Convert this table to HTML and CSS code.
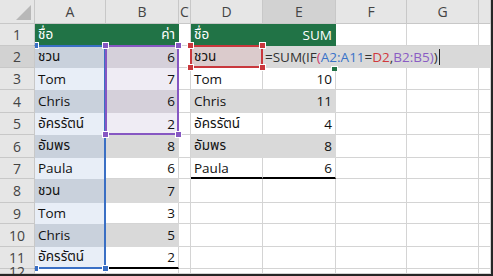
FILE: index.html
```html
<!DOCTYPE html>
<html>
<head>
<meta charset="utf-8">
<link rel="stylesheet" href="styles.css">
</head>
<body>
<div class="wrap">
<div class="sheet grid">
  <div class="corner"><span class="tri"></span></div>
  <div class="ch">A</div>
  <div class="ch">B</div>
  <div class="ch">C</div>
  <div class="ch">D</div>
  <div class="ch act">E</div>
  <div class="ch">F</div>
  <div class="ch">G</div>
  <div class="ch"></div>

  <div class="rh">1</div>
  <div class="c g">ชื่อ</div>
  <div class="c g n">ค่า</div>
  <div class="c"></div>
  <div class="c g">ชื่อ</div>
  <div class="c g n">SUM</div>
  <div class="c"></div>
  <div class="c"></div>
  <div class="c"></div>

  <div class="rh act">2</div>
  <div class="c sa1">ชวน</div>
  <div class="c sb1 n">6</div>
  <div class="c"></div>
  <div class="c sd">ชวน</div>
  <div class="c edit"><span class="k">=SUM(IF</span><span class="pr">(</span><span class="bl">A2:A11</span><span class="k">=</span><span class="rd">D2</span><span class="k">,</span><span class="pu">B2:B5</span><span class="pu">)</span><span class="k">)</span><span class="caret"></span></div>

  <div class="rh">3</div>
  <div class="c sa2">Tom</div>
  <div class="c sb2 n">7</div>
  <div class="c"></div>
  <div class="c">Tom</div>
  <div class="c n">10</div>
  <div class="c"></div>
  <div class="c"></div>
  <div class="c"></div>

  <div class="rh">4</div>
  <div class="c sa1">Chris</div>
  <div class="c sb1 n">6</div>
  <div class="c"></div>
  <div class="c band">Chris</div>
  <div class="c band n">11</div>
  <div class="c"></div>
  <div class="c"></div>
  <div class="c"></div>

  <div class="rh">5</div>
  <div class="c sa2">อัครรัตน์</div>
  <div class="c sb2 n">2</div>
  <div class="c"></div>
  <div class="c">อัครรัตน์</div>
  <div class="c n">4</div>
  <div class="c"></div>
  <div class="c"></div>
  <div class="c"></div>

  <div class="rh">6</div>
  <div class="c sa1">อัมพร</div>
  <div class="c band n">8</div>
  <div class="c"></div>
  <div class="c band">อัมพร</div>
  <div class="c band n">8</div>
  <div class="c"></div>
  <div class="c"></div>
  <div class="c"></div>

  <div class="rh">7</div>
  <div class="c sa2">Paula</div>
  <div class="c n">6</div>
  <div class="c"></div>
  <div class="c tb">Paula</div>
  <div class="c n tb">6</div>
  <div class="c"></div>
  <div class="c"></div>
  <div class="c"></div>

  <div class="rh">8</div>
  <div class="c sa1">ชวน</div>
  <div class="c band n">7</div>
  <div class="c"></div>
  <div class="c"></div>
  <div class="c"></div>
  <div class="c"></div>
  <div class="c"></div>
  <div class="c"></div>

  <div class="rh">9</div>
  <div class="c sa2">Tom</div>
  <div class="c n">3</div>
  <div class="c"></div>
  <div class="c"></div>
  <div class="c"></div>
  <div class="c"></div>
  <div class="c"></div>
  <div class="c"></div>

  <div class="rh">10</div>
  <div class="c sa1">Chris</div>
  <div class="c band n">5</div>
  <div class="c"></div>
  <div class="c"></div>
  <div class="c"></div>
  <div class="c"></div>
  <div class="c"></div>
  <div class="c"></div>

  <div class="rh">11</div>
  <div class="c sa2 tb">อัครรัตน์</div>
  <div class="c n tb">2</div>
  <div class="c"></div>
  <div class="c"></div>
  <div class="c"></div>
  <div class="c"></div>
  <div class="c"></div>
  <div class="c"></div>

  <div class="rh">12</div>
  <div class="c"></div>
  <div class="c"></div>
  <div class="c"></div>
  <div class="c"></div>
  <div class="c"></div>
  <div class="c"></div>
  <div class="c"></div>
  <div class="c"></div>
</div>
<div class="overlay grid">
  <div class="range r-blue"><span class="h tl"></span><span class="h bl"></span><span class="h br"></span></div>
  <div class="range r-purple"><span class="h tl"></span><span class="h tr"></span><span class="h bl"></span><span class="h br"></span></div>
  <div class="range r-red"><span class="h tl"></span><span class="h tr"></span><span class="h bl"></span><span class="h br"></span></div>
  <div class="active"><span class="fill"></span></div>
</div>
</div>
</body>
</html>
```

FILE: styles.css
```css
html, body {
  margin: 0;
  padding: 0;
  background: #ffffff;
}

.wrap {
  position: relative;
  width: 491px;
  height: 274px;
  border-right: 2px solid #262626;
  border-bottom: 2px solid #262626;
  overflow: hidden;
}

.grid {
  display: grid;
  grid-template-columns: 35px 71px 73px 12px 72px 73px 71px 72px 12px;
  grid-template-rows: 24px 22px 22px 22px 23px 22px 23px 21px 24px 21px 23px 22px 5px;
}

.sheet {
  width: 491px;
  height: 274px;
  font-family: "Open Sans", "Noto Sans", "Noto Sans Thai", "DejaVu Sans", sans-serif;
  font-size: 13.5px;
  color: #111;
}

.overlay {
  position: absolute;
  left: 0;
  top: 0;
  width: 491px;
  height: 274px;
  pointer-events: none;
}

.corner {
  background: #e6e6e6;
  border-right: 1px solid #c8c8c8;
  border-bottom: 1px solid #c8c8c8;
  position: relative;
}
.tri {
  position: absolute;
  right: 3px;
  bottom: 3px;
  width: 0;
  height: 0;
  border-left: 15px solid transparent;
  border-bottom: 15px solid #b8b8b8;
}

.ch, .rh {
  background: #e6e6e6;
  border-right: 1px solid #c8c8c8;
  border-bottom: 1px solid #c8c8c8;
  display: flex;
  align-items: center;
  justify-content: center;
  color: #444;
  font-size: 14px;
}
.ch.act, .rh.act {
  background: #d2d2d2;
}

.c {
  border-right: 1px solid #d4d4d4;
  border-bottom: 1px solid #d4d4d4;
  display: flex;
  align-items: center;
  padding: 0 3px;
  white-space: nowrap;
  min-width: 0;
}
.n { justify-content: flex-end; }

.g { background: #217346; color: #fff; border-color: transparent; }
.band { background: #d9d9d9; border-color: transparent; }
.sa1 { background: #c9d1dc; border-color: transparent; }
.sa2 { background: #e8eef7; border-color: transparent; }
.sb1 { background: #d5d0da; border-color: transparent; }
.sb2 { background: #efecf4; border-color: transparent; }
.sd { background: #dbcbcc; border-color: transparent; }
.c.tb { border-bottom: 2px solid #000; }

.edit {
  grid-column: span 4;
  background: #d9d9d9;
  border-color: transparent;
  padding-left: 2px;
  color: #333;
}
.edit .bl { color: #3a73c8; }
.edit .rd { color: #d1383d; }
.edit .pu { color: #8a5cc4; }
.edit .pr { color: #d13a6a; }
.caret {
  display: inline-block;
  width: 1px;
  height: 16px;
  background: #222;
  margin-left: 1px;
}

.range {
  position: relative;
  margin: -1px 0 0 -1px;
  border: 2px solid;
}
.r-blue {
  grid-row: 3 / 13;
  grid-column: 2 / 3;
  border-color: #3a6fc4;
  border-left-color: transparent;
}
.r-purple { grid-row: 3 / 7; grid-column: 3 / 4; border-color: #8657c2; }
.r-red { grid-row: 3 / 4; grid-column: 5 / 6; border-color: #c9373c; }

.h {
  position: absolute;
  width: 5px;
  height: 5px;
  border: 1px solid #fff;
}
.r-blue .h { background: #3a6fc4; }
.r-purple .h { background: #8657c2; }
.r-red .h { background: #c9373c; }
.h.tl { left: -5px; top: -5px; }
.h.tr { right: -5px; top: -5px; }
.h.bl { left: -5px; bottom: -5px; }
.h.br { right: -5px; bottom: -5px; }
.r-blue .h.tl, .r-blue .h.bl {
  left: -1px;
  width: 3px;
  border-left: 0;
}

.active {
  grid-row: 3 / 4;
  grid-column: 6 / 7;
  position: relative;
}
.fill {
  position: absolute;
  right: -2px;
  bottom: -3px;
  width: 5px;
  height: 4px;
  background: #217346;
  border: 1px solid #fff;
  border-bottom: 0;
}
```
